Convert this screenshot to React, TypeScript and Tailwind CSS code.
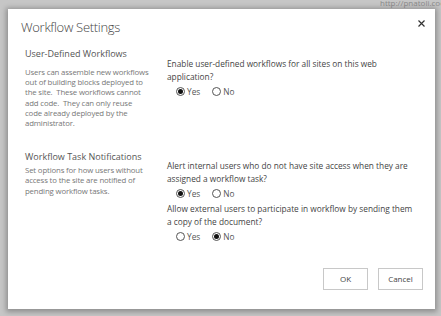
import React from "react";

const font = { fontFamily: '"Open Sans", "Noto Sans", sans-serif' };

function Radio({ label, checked }: { label: string; checked?: boolean }) {
  return (
    <span className="flex items-center gap-[2px]">
      <span className="flex h-[9px] w-[9px] items-center justify-center rounded-full border border-[#555]">
        {checked && <span className="h-[5px] w-[5px] rounded-full bg-[#111]" />}
      </span>
      <span className="text-[#555]">{label}</span>
    </span>
  );
}

function RadioRow({ yes }: { yes: boolean }) {
  return (
    <div className="flex h-[17px] items-center gap-[12px] pl-[9px]">
      <Radio label="Yes" checked={yes} />
      <Radio label="No" checked={!yes} />
    </div>
  );
}

function Lines({ lines, className }: { lines: string[]; className?: string }) {
  return (
    <div className={className}>
      {lines.map((l) => (
        <div key={l} className="whitespace-pre">
          {l}
        </div>
      ))}
    </div>
  );
}

export default function App() {
  return (
    <div
      className="relative h-[316px] w-[441px] overflow-hidden bg-[#c6c6c6] pl-[8px] pt-[9px]"
      style={font}
    >
      <div className="absolute right-[-6px] top-[-3px] text-[8px] text-[#8a8a8a]">http://pnatoli.cool</div>
      <div className="relative flex h-[300px] w-[427px] flex-col bg-white shadow-[0_1px_5px_2px_rgba(0,0,0,0.28)]">
        <div className="pl-[13px] pt-[9px]">
          <h1 className="text-[13px] font-light leading-[18px] tracking-[-0.3px] text-[#444]">Workflow Settings</h1>
        </div>
        <button className="absolute right-[10px] top-[11px]">
          <svg width="7" height="7" viewBox="0 0 7 7" className="block">
            <path d="M0.5 0.5L6.5 6.5M6.5 0.5L0.5 6.5" stroke="#333" strokeWidth="1.2" />
          </svg>
        </button>

        <div className="grid grid-cols-[142px_1fr] pl-[17px] pt-[12px] text-[8.3px] leading-[13px]">
          <div>
            <div className="text-[9px] leading-[12px] text-[#555]">User-Defined Workflows</div>
            <Lines
              className="mt-[7px] text-[7.8px] leading-[10.2px] tracking-[-0.15px] text-[#777]"
              lines={[
                "Users can assemble new workflows",
                "out of building blocks deployed to",
                "the site.  These workflows cannot",
                "add code.  They can only reuse",
                "code already deployed by the",
                "administrator.",
              ]}
            />
          </div>
          <div className="pt-[9px] text-[#444]">
            <Lines lines={["Enable user-defined workflows for all sites on this web", "application?"]} />
            <RadioRow yes />
          </div>

          <div className="pt-[23px]">
            <div className="text-[9px] leading-[12px] text-[#555]">Workflow Task Notifications</div>
            <Lines
              className="mt-[2px] text-[7.8px] leading-[10.2px] tracking-[-0.15px] text-[#777]"
              lines={[
                "Set options for how users without",
                "access to the site are notified of",
                "pending workflow tasks.",
              ]}
            />
          </div>
          <div className="pt-[31px] text-[#444]">
            <Lines lines={["Alert internal users who do not have site access when they are", "assigned a workflow task?"]} />
            <RadioRow yes />
            <Lines lines={["Allow external users to participate in workflow by sending them", "a copy of the document?"]} />
            <RadioRow yes={false} />
          </div>
        </div>

        <div className="mt-auto flex justify-end gap-[10px] pb-[19px] pr-[12px]">
          <button className="h-[22px] w-[45px] border border-[#c8c8c8] bg-white text-[8px] text-[#444]">OK</button>
          <button className="h-[22px] w-[45px] border border-[#c8c8c8] bg-white text-[8px] text-[#444]">Cancel</button>
        </div>
      </div>
    </div>
  );
}
